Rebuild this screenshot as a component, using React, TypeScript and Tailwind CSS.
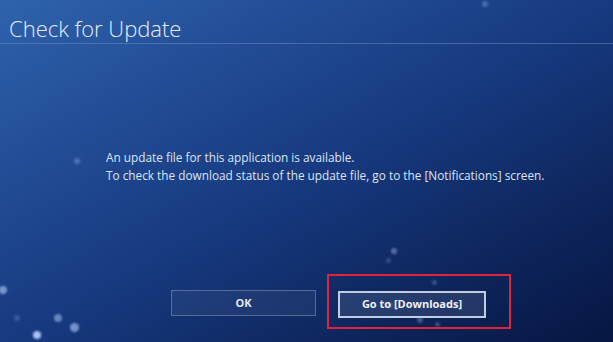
const dots = [
  { x: 3, y: 290, s: 8, o: "opacity-60" },
  { x: 58, y: 318, s: 8, o: "opacity-50" },
  { x: 74, y: 327, s: 9, o: "opacity-60" },
  { x: 37, y: 335, s: 8, o: "opacity-90" },
  { x: 17, y: 318, s: 6, o: "opacity-20" },
  { x: 77, y: 161, s: 6, o: "opacity-30" },
  { x: 394, y: 251, s: 6, o: "opacity-40" },
  { x: 388, y: 260, s: 5, o: "opacity-20" },
  { x: 485, y: 4, s: 6, o: "opacity-30" },
  { x: 434, y: 282, s: 5, o: "opacity-25" },
  { x: 420, y: 320, s: 6, o: "opacity-30" },
  { x: 437, y: 324, s: 5, o: "opacity-25" },
  { x: 390, y: 305, s: 6, o: "opacity-20" },
];

export default function App() {
  return (
    <div
      className="relative w-[613px] h-[342px] overflow-hidden bg-gradient-to-br from-[#2f62ad] via-[#173a80] to-[#071642] text-[#e8eef8]"
      style={{ fontFamily: '"Open Sans", "Noto Sans", sans-serif' }}
    >
      {dots.map((d, i) => (
        <span
          key={i}
          className={`absolute rounded-full bg-[#b8d0ff] blur-[1px] ${d.o}`}
          style={{ left: d.x - d.s / 2, top: d.y - d.s / 2, width: d.s, height: d.s }}
        />
      ))}

      <div className="relative flex flex-col h-full">
        <div className="h-[44px] pl-[9px] pt-[13px] border-b border-[#6f8fc4]/50">
          <h1 className="text-[22px] leading-[30px] font-light text-[#e6eefb]">Check for Update</h1>
        </div>

        <div className="pl-[106px] pt-[104px] text-[11.8px] leading-[18px] text-[#dde5f2]">
          <p>An update file for this application is available.</p>
          <p>To check the download status of the update file, go to the [Notifications] screen.</p>
        </div>

        <div className="flex gap-[22px] pl-[171px] pt-[106px]">
          <button className="w-[145px] h-[26px] border border-[#7180a6]/70 bg-white/5 text-[11px] font-bold text-[#e2e8f2]">
            OK
          </button>
          <div className="relative">
            <button className="w-[148px] h-[27px] border-2 border-[#c3cde2] bg-white/10 text-[11px] font-bold text-[#eef2fa]">
              Go to [Downloads]
            </button>
            <span className="absolute -left-[11px] -top-[16px] -right-[25px] -bottom-[11px] border-2 border-[#e0243c]" />
          </div>
        </div>
      </div>
    </div>
  );
}
